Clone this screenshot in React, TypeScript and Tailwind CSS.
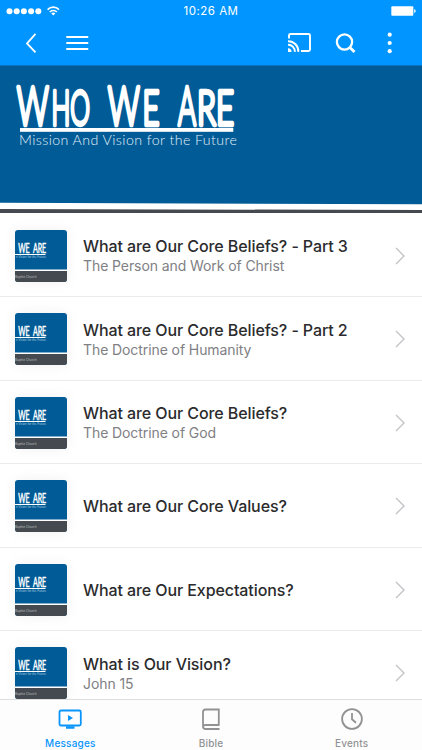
import React from "react";

const FONT = "font-['Inter','Liberation_Sans',sans-serif]";

const rows = [
  { title: "What are Our Core Beliefs? - Part 3", sub: "The Person and Work of Christ" },
  { title: "What are Our Core Beliefs? - Part 2", sub: "The Doctrine of Humanity" },
  { title: "What are Our Core Beliefs?", sub: "The Doctrine of God" },
  { title: "What are Our Core Values?" },
  { title: "What are Our Expectations?" },
  { title: "What is Our Vision?", sub: "John 15" },
];

function StatusBar() {
  return (
    <div className="grid h-[21px] grid-cols-3 items-center pr-[6px] pl-[6px]">
      <svg width="60" height="14" viewBox="0 0 60 14" fill="#fff">
        {[3.5, 10.7, 17.9, 25.1, 32.3].map((x) => (
          <circle key={x} cx={x} cy="7.3" r="3" />
        ))}
        <g fill="none" stroke="#fff" strokeWidth="1.6">
          <path d="M41.6 5.6a7.9 7.9 0 0 1 11.400 0" />
          <path d="M43.8 8a4.8 4.8 0 0 1 7 0" />
        </g>
        <path d="M47.3 11.5l-2-2.1a2.9 2.9 0 0 1 4 0z" />
      </svg>
      <span className="pt-[1px] text-center text-[11.5px] leading-[20px] tracking-[0.5px] text-white">10:26 AM</span>
      <svg className="justify-self-end" width="26" height="12" viewBox="0 0 26 12" fill="#fff">
        <rect x="1.3" y="1.2" width="22" height="9.6" rx="1" />
        <path d="M24.2 4.3h.5q1 .5 1 1.7t-1 1.7h-.5z" />
      </svg>
    </div>
  );
}

function NavBar() {
  return (
    <div className="flex h-[44px] items-center pr-[20px] pl-[24px]">
      <svg width="14" height="24" viewBox="0 0 14 24" fill="none" stroke="#fff" strokeWidth="1.8">
        <path d="M11.5 2.8L3 12.4l8.5 9" />
      </svg>
      <svg className="ml-[27px]" width="24" height="24" viewBox="0 0 24 24" stroke="#fff" strokeWidth="2" strokeLinecap="round">
        <path d="M2 6h20.500M2 12h20.500M2 18h20.500" />
      </svg>
      <svg className="ml-auto" width="25" height="24" viewBox="0 0 25 24" fill="none" stroke="#fff" strokeWidth="1.9">
        <path d="M2 7.500V4.500Q2 3 3.500 3H21.500Q23 3 23 4.500V18.500Q23 20 21.500 20H14" />
        <path d="M1 10.200A10 10 0 0 1 11.300 20.900M1 13.800A6.700 6.700 0 0 1 7.900 20.900" />
        <path d="M1 17.300A3.700 3.700 0 0 1 4.600 20.900H1z" fill="#fff" stroke="none" />
      </svg>
      <svg className="ml-[22px]" width="24" height="24" viewBox="0 0 24 24" fill="none" stroke="#fff" strokeWidth="2.300">
        <circle cx="10.500" cy="11" r="7.600" />
        <path d="M15.900 16.400l4.600 4.600" strokeWidth="2.800" />
      </svg>
      <svg className="ml-[20px]" width="24" height="24" viewBox="0 0 24 24" fill="#fff">
        <circle cx="11.700" cy="3.700" r="2.100" />
        <circle cx="11.700" cy="12" r="2.100" />
        <circle cx="11.700" cy="20.200" r="2.100" />
      </svg>
    </div>
  );
}

function Wordmark() {
  const parts = [
    { t: "W", x: 16.8, w: 32, s: 53 },
    { t: "HO", x: 51.5, w: 38.5, s: 47 },
    { t: "W", x: 107.8, w: 32, s: 53 },
    { t: "E", x: 142.5, w: 17, s: 47 },
    { t: "A", x: 178, w: 18, s: 53 },
    { t: "RE", x: 197, w: 37, s: 47 },
  ];
  return (
    <g>
      <g fill="#fff" stroke="#fff" strokeWidth="4.400" strokeLinejoin="round" fontFamily="Lato, sans-serif" fontWeight="300">
        {parts.map((p) => (
          <text key={p.x} x={p.x} y="60" fontSize={p.s} textLength={p.w} lengthAdjust="spacingAndGlyphs">
            {p.t}
          </text>
        ))}
      </g>
      <rect x="20" y="63" width="213.300" height="3.800" fill="#fff" />
      <text x="19" y="80" fontSize="14.200" fill="#e4f0f8" fontFamily="Lato, sans-serif" fontWeight="300" textLength="218">
        Mission And Vision for the Future
      </text>
    </g>
  );
}

function Banner() {
  return (
    <svg className="block shrink-0" width="422" height="148.5" viewBox="0 0 422 148.5">
      <rect width="422" height="149" fill="#fff" />
      <path d="M0 0H422V139.300L0 137.800z" fill="#005b96" />
      <path d="M0 143.900L422 145.100V148H0z" fill="#444a50" />
      <rect width="422" height="1" fill="#0872bd" />
      <Wordmark />
    </svg>
  );
}

function Thumb() {
  return (
    <svg className="block shrink-0 rounded-[3px] shadow-[0_0_14px_rgba(0,0,0,0.06)]" width="52" height="52" viewBox="0 0 52 52">
      <rect width="52" height="52" fill="#005b96" />
      <rect y="39.500" width="52" height="1.500" fill="#fff" />
      <rect y="41" width="52" height="11" fill="#444a50" />
      <text x="3.200" y="23.400" fontSize="12.500" fill="#fff" stroke="#fff" strokeWidth="0.500" fontFamily="Lato, sans-serif" wordSpacing="3" textLength="28" lengthAdjust="spacingAndGlyphs">
        WE ARE
      </text>
      <rect y="24" width="30.500" height="1" fill="#fff" />
      <text x="0.800" y="28" fontSize="3.300" fill="#9fc2dc" fontFamily="Lato, sans-serif" textLength="30.500">
        n Vision for the Future
      </text>
      <text x="0" y="47.500" fontSize="3.300" fill="#b6babd" fontFamily="Lato, sans-serif" textLength="21.500">
        Baptist Church
      </text>
    </svg>
  );
}

function Row({ title, sub }: { title: string; sub?: string }) {
  return (
    <div className="flex h-[83.500px] shrink-0 items-center border-b border-[#ebebed] pt-[2px] pr-[16px] pl-[15px]">
      <Thumb />
      <div className="ml-[16px] flex-1">
        <div className="text-[16px] leading-[20px] font-medium tracking-[-0.090px] text-[#2b2b2d]">{title}</div>
        {sub && <div className="text-[14px] leading-[19px] tracking-[-0.090px] text-[#808084]">{sub}</div>}
      </div>
      <svg width="12" height="20" viewBox="0 0 12 20" fill="none" stroke="#c4c4c8" strokeWidth="1.400">
        <path d="M2 2l8 8-8 8" />
      </svg>
    </div>
  );
}

function Tab({ label, active, children }: { label: string; active?: boolean; children: React.ReactNode }) {
  return (
    <div className={"flex flex-1 flex-col items-center pt-[7px] " + (active ? "text-[#0a95fb]" : "text-[#929294]")}>
      {children}
      <span className="mt-[5px] text-[10px] leading-[14px] font-medium tracking-[0.200px]">{label}</span>
    </div>
  );
}

export default function App() {
  return (
    <div className={"flex h-[750px] w-[422px] flex-col overflow-hidden bg-white " + FONT}>
      <header className="shrink-0 bg-[#0095ff]">
        <StatusBar />
        <NavBar />
      </header>
      <Banner />
      <main className="flex min-h-0 flex-1 flex-col overflow-hidden">
        {rows.map((r) => (
          <Row key={r.title} title={r.title} sub={r.sub} />
        ))}
      </main>
      <nav className="flex h-[51px] shrink-0 border-t border-[#dededf] bg-[#fdfdfd]">
        <Tab label="Messages" active>
          <svg width="26" height="24" viewBox="0 0 26 24" fill="none" stroke="currentColor" strokeWidth="1.800">
            <rect x="2.500" y="3.500" width="21.300" height="15" rx="1.500" />
            <path d="M9 19.200h8.500v2.500H9zM11 8l5 3-5 3z" fill="currentColor" stroke="none" />
          </svg>
        </Tab>
        <Tab label="Bible">
          <svg width="24" height="24" viewBox="0 0 24 24" fill="none" stroke="currentColor" strokeWidth="1.800">
            <path d="M20.500 18H6.500Q4 18 4 20V5Q4 2.500 6.500 2.500H19.800V18M4 19.500Q4 22 6.500 22H20.500" />
          </svg>
        </Tab>
        <Tab label="Events">
          <svg width="24" height="24" viewBox="0 0 24 24" fill="none" stroke="currentColor" strokeWidth="1.800">
            <circle cx="12" cy="12" r="9.900" />
            <path d="M12 6v6.300l4 3.500" />
          </svg>
        </Tab>
      </nav>
    </div>
  );
}
